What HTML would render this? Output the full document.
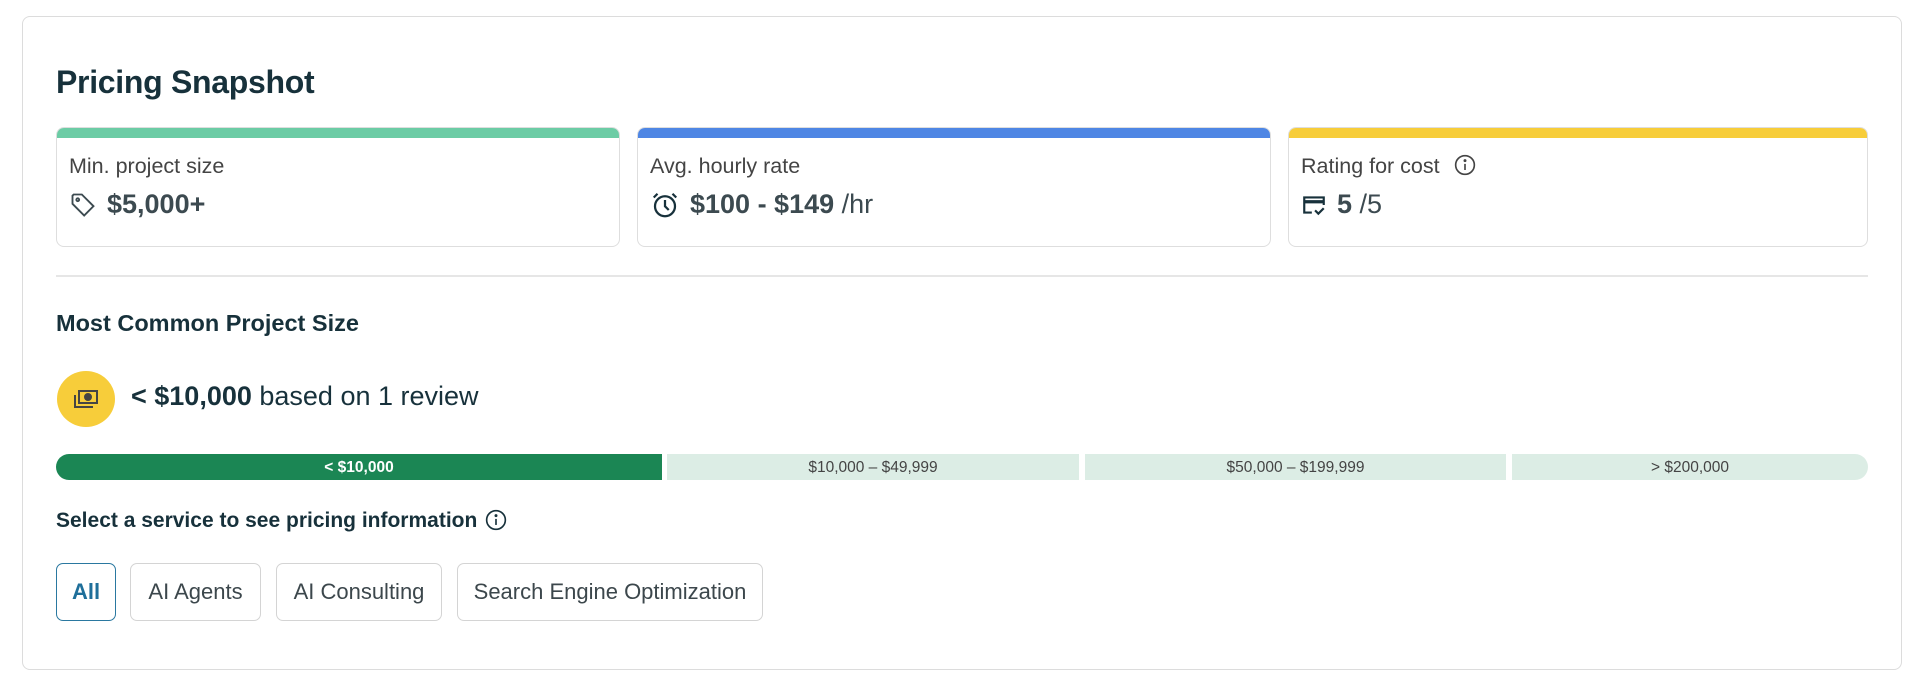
<!DOCTYPE html>
<html><head><meta charset="utf-8"><style>
*{box-sizing:border-box;margin:0;padding:0}
body{width:1920px;height:688px;background:#fff;font-family:"Liberation Sans",Arial,sans-serif;color:#17313b;position:relative;overflow:hidden}
.outer{position:absolute;left:22px;top:16px;width:1880px;height:654px;border:1.5px solid #dcdcdc;border-radius:8px}
.abs{position:absolute}
h1{position:absolute;left:56px;top:64px;font-size:32px;font-weight:bold;color:#17313b;letter-spacing:-0.3px}
.card{position:absolute;top:127px;height:120px;border:1.5px solid #dedede;border-radius:8px;overflow:hidden;background:#fff}
.card .bar{height:10px}
.card .lbl{position:absolute;left:12px;top:26px;font-size:21.5px;color:#444}
.card .val{position:absolute;left:12px;top:61px;font-size:27px;color:#3c4a50;display:flex;align-items:center;gap:10px}
.card .val b{font-weight:bold}
.div{position:absolute;left:56px;top:275px;width:1812px;height:1.5px;background:#e6e6e6}
.seg{position:absolute;top:454px;height:26px;font-size:15.5px;padding-top:1px;display:flex;align-items:center;justify-content:center;color:#444;background:#dcede5}
.btn{position:absolute;top:563px;height:58px;border:1.5px solid #d4d4d4;border-radius:7px;font-size:22px;color:#3c474c;display:flex;align-items:center;justify-content:center}
</style></head><body>
<div class="outer"></div>
<h1>Pricing Snapshot</h1>

<div class="card" style="left:56px;width:564px"><div class="bar" style="background:#6ccca5"></div>
<div class="lbl">Min. project size</div>
<div class="val"><svg width="28" height="28" viewBox="0 0 24 24" fill="none" stroke="#3c4a50" stroke-width="1.6"><path d="M3 4v7l10 10 8-8L11 3H4z"/><circle cx="7.5" cy="7.5" r="1.2"/></svg><b>$5,000+</b></div></div>

<div class="card" style="left:637px;width:634px"><div class="bar" style="background:#4e86e4"></div>
<div class="lbl">Avg. hourly rate</div>
<div class="val"><svg width="30" height="30" viewBox="0 0 24 24" fill="none" stroke="#17313b" stroke-width="1.8"><circle cx="12" cy="13" r="8"/><path d="M12 8v5l3 3M3 6l3-3M21 6l-3-3"/></svg><span><b>$100 - $149</b> /hr</span></div></div>

<div class="card" style="left:1288px;width:580px"><div class="bar" style="background:#f7cd3a"></div>
<div class="lbl">Rating for cost <svg style="vertical-align:-3px;margin-left:8px" width="22" height="22" viewBox="0 0 20 20" fill="none" stroke="#444" stroke-width="1.5"><circle cx="10" cy="10" r="8.5"/><path d="M10 9v5.5"/><circle cx="10" cy="6" r=".6" fill="#444"/></svg></div>
<div class="val"><svg width="26" height="26" viewBox="0 0 24 24" fill="none" stroke="#17313b" stroke-width="2"><path d="M10 19H3V5h18v7"/><path d="M3 9h18" stroke-width="3"/><path d="M13 17l3 3 5-5"/></svg><span><b>5</b> /5</span></div></div>

<div class="div"></div>
<div class="abs" style="left:56px;top:310px;font-size:23.5px;font-weight:bold">Most Common Project Size</div>
<div class="abs" style="left:57px;top:371px;width:58px;height:56px;border-radius:50%;background:#f7cd3a;display:flex;align-items:center;justify-content:center">
<svg width="28" height="24" viewBox="0 0 28 24" fill="none" stroke="#444" stroke-width="2"><rect x="7" y="4" width="18" height="12"/><circle cx="16" cy="10" r="3" fill="#444"/><path d="M3 8v12h18"/></svg></div>
<div class="abs" style="left:131px;top:381px;font-size:27px;color:#17313b"><b>&lt; $10,000</b> based on 1 review</div>

<div class="seg" style="left:56px;width:606px;background:#1b8654;color:#fff;font-weight:bold;border-radius:13px 0 0 13px">&lt; $10,000</div>
<div class="seg" style="left:667px;width:412px">$10,000 – $49,999</div>
<div class="seg" style="left:1085px;width:421px">$50,000 – $199,999</div>
<div class="seg" style="left:1512px;width:356px;border-radius:0 13px 13px 0">&gt; $200,000</div>

<div class="abs" style="left:56px;top:509px;font-size:21px;font-weight:bold">Select a service to see pricing information <svg style="vertical-align:-4px;margin-left:2px" width="22" height="22" viewBox="0 0 20 20" fill="none" stroke="#17313b" stroke-width="1.5"><circle cx="10" cy="10" r="8.5"/><path d="M10 9v5.5"/><circle cx="10" cy="6" r=".6" fill="#17313b"/></svg></div>

<div class="btn" style="left:56px;width:60px;border-color:#2a78a0;color:#1f6f9a;font-weight:bold">All</div>
<div class="btn" style="left:130px;width:131px">AI Agents</div>
<div class="btn" style="left:276px;width:166px">AI Consulting</div>
<div class="btn" style="left:457px;width:306px">Search Engine Optimization</div>
</body></html>
